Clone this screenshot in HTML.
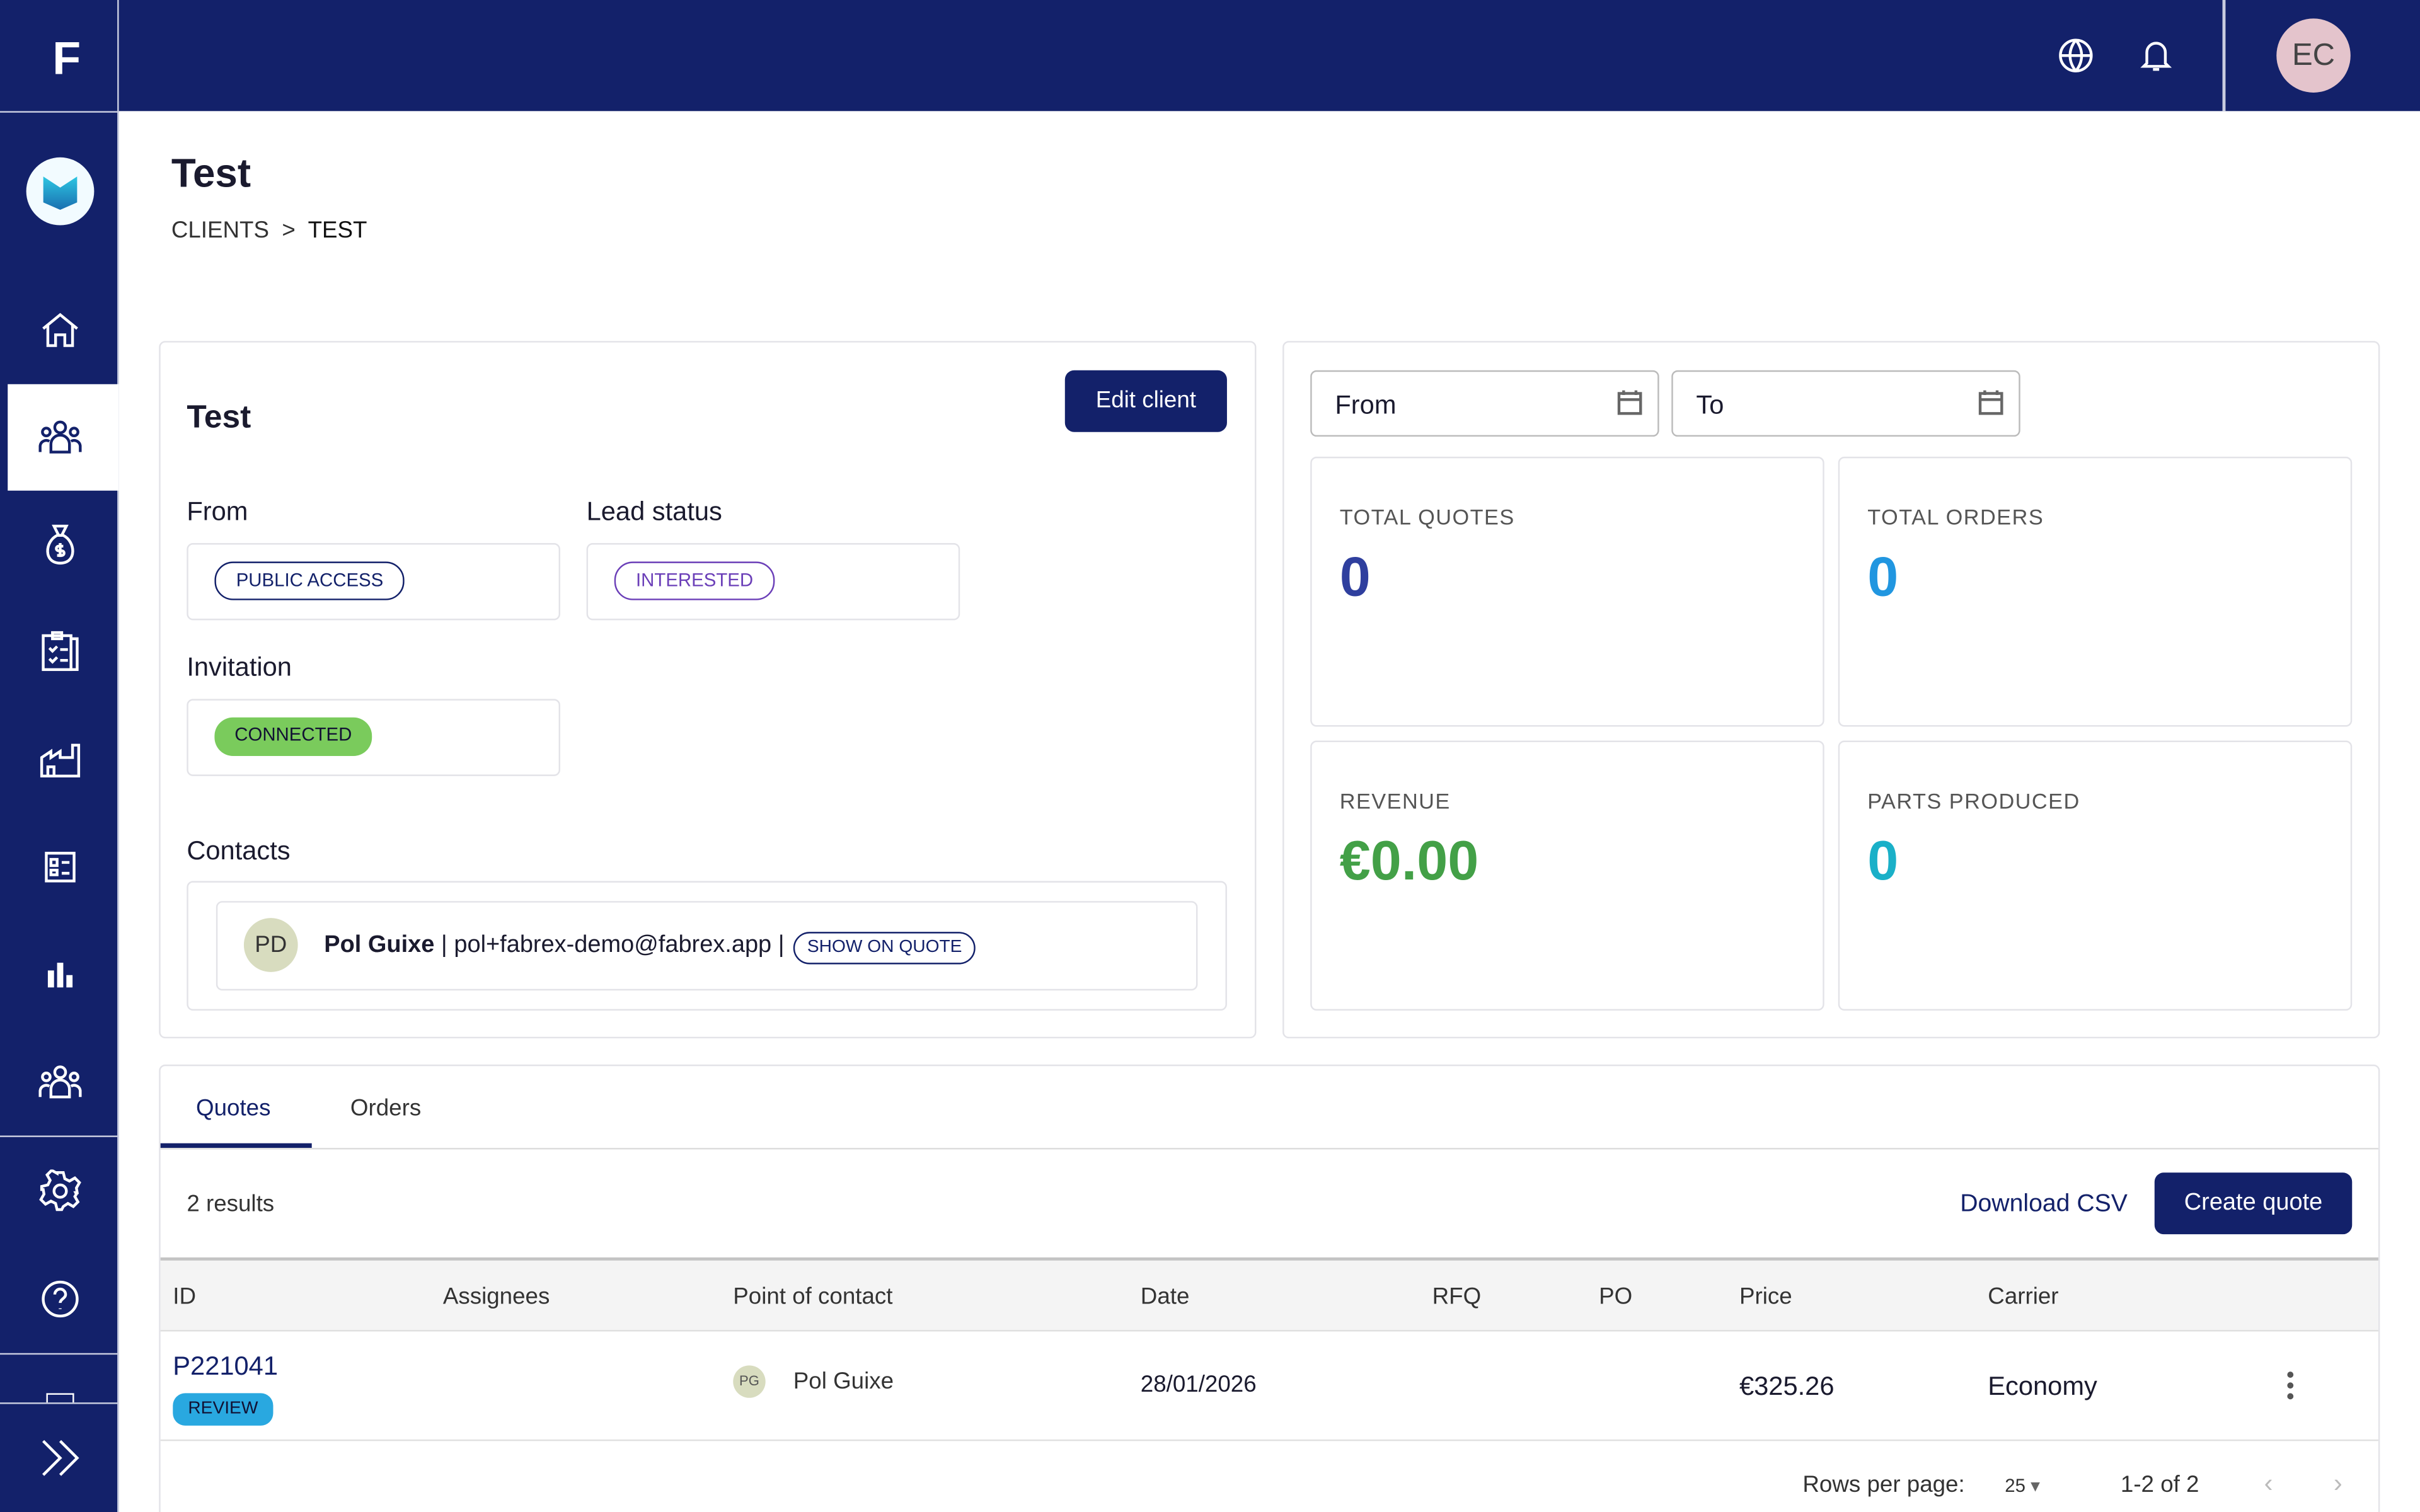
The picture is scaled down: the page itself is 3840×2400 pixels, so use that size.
<!DOCTYPE html>
<html><head><meta charset="utf-8"><style>
*{box-sizing:border-box;margin:0;padding:0}
html,body{width:3840px;height:2400px;overflow:hidden;background:#fff}
#w{width:1568px;height:980px;transform:scale(2.44898);transform-origin:0 0;position:relative;font-family:"Liberation Sans",sans-serif;color:#1a1a2e}
.a{position:absolute}
.nav{background:#13216a}
.card{border:1px solid #e3e3e8;border-radius:4px;background:#fff}
.lbl{font-size:17px;color:#1a1a2e}
.chip{border-radius:12px;font-size:12px;padding:0 13px;height:25px;line-height:23px;display:inline-block}
.kpi{font-size:14px;letter-spacing:0.6px;color:#555}
.big{font-size:36px;font-weight:bold}
.th{font-size:15px;color:#333;top:831px}
svg{stroke:#fff;fill:none;stroke-width:1.8}
</style></head><body><div id="w">
<div class="a nav" style="left:0;top:0;width:1568px;height:72px"></div>
<div class="a nav" style="left:0;top:0;width:77px;height:980px;border-right:1px solid #c9cde0"></div>
<div class="a" style="left:0;top:72px;width:77px;height:1px;background:#c9cde0"></div>
<div class="a" style="left:34px;top:22px;color:#fff;font-size:30px;font-weight:bold">F</div>
<div class="a" style="left:1440px;top:0;width:2px;height:72px;background:#c9cde0"></div>
<svg class="a" style="left:1333px;top:24px" width="24" height="24" viewBox="0 0 24 24"><circle cx="12" cy="12" r="10"/><path d="M2 12h20M12 2c-5 6-5 14 0 20M12 2c5 6 5 14 0 20"/></svg>
<svg class="a" style="left:1386px;top:24px" width="22" height="24" viewBox="0 0 22 24"><path d="M5 17V10a6 6 0 0112 0v7l2 2H3zM9 21h4"/></svg>
<div class="a" style="left:1475px;top:12px;width:48px;height:48px;border-radius:50%;background:#e4c4cc;color:#444;font-size:20px;text-align:center;line-height:48px">EC</div>
<div class="a" style="left:17px;top:102px;width:44px;height:44px;border-radius:50%;background:#f2fbff"></div>
<div class="a" style="left:28px;top:112px;width:22px;height:24px;background:linear-gradient(#2fd0e8,#1a6fb0);clip-path:polygon(0 10%,50% 40%,100% 10%,100% 80%,50% 100%,0 80%)"></div>
<div class="a" style="left:5px;top:249px;width:72px;height:69px;background:#fff"></div>
<svg class="a" style="left:26px;top:201px" width="26" height="26" viewBox="0 0 26 26"><path d="M2 12L13 3l11 9M5 10v13h5v-7h6v7h5V10"/></svg>
<svg class="a" style="left:25px;top:270px;stroke:#13216a" width="28" height="26" viewBox="0 0 28 26"><circle cx="14" cy="7" r="3.5"/><circle cx="5" cy="10" r="2.5"/><circle cx="23" cy="10" r="2.5"/><path d="M8 23v-5a6 6 0 0112 0v5zM1 23v-4a4 4 0 016-3M27 23v-4a4 4 0 00-6-3"/></svg>
<svg class="a" style="left:27px;top:339px" width="24" height="28" viewBox="0 0 24 28"><path d="M8 2h8l-3 6h-2zM10 8C2 12 1 26 12 26s10-14 2-18M12 13v9M14 15h-3a1.5 1.5 0 000 3h2a1.5 1.5 0 010 3h-3"/></svg>
<svg class="a" style="left:26px;top:408px" width="26" height="28" viewBox="0 0 26 28"><rect x="2" y="4" width="18" height="22"/><path d="M20 6h4v20h-4M8 2h6v4H8zM6 12l2 2 3-3M6 19l2 2 3-3M13 13h5M13 20h5"/></svg>
<svg class="a" style="left:25px;top:479px" width="28" height="26" viewBox="0 0 28 26"><path d="M2 24V12l6-4v4l6-4v4h8V4h4v20zM6 24v-6h4v6"/></svg>
<svg class="a" style="left:28px;top:551px" width="22" height="22" viewBox="0 0 22 22"><rect x="2" y="2" width="18" height="18"/><path d="M5 6h4v4H5zM5 13h4v3H5zM12 8h5M12 15h5"/></svg>
<svg class="a" style="left:29px;top:621px;fill:#fff;stroke:none" width="20" height="20" viewBox="0 0 20 20"><rect x="2" y="8" width="4" height="11"/><rect x="8" y="3" width="4" height="16"/><rect x="14" y="11" width="4" height="8"/></svg>
<svg class="a" style="left:25px;top:688px" width="28" height="26" viewBox="0 0 28 26"><circle cx="14" cy="7" r="3.5"/><circle cx="5" cy="10" r="2.5"/><circle cx="23" cy="10" r="2.5"/><path d="M8 23v-5a6 6 0 0112 0v5zM1 23v-4a4 4 0 016-3M27 23v-4a4 4 0 00-6-3"/></svg>
<div class="a" style="left:0;top:736px;width:77px;height:1px;background:#c9cde0"></div>
<svg class="a" style="left:25px;top:758px" width="28" height="28" viewBox="0 0 28 28"><circle cx="14" cy="14" r="4"/><path d="M12 2h4l1 4 3 1.5 3.5-2 3 3-2 3.5L25 15l-1 0 .5 1-1 1.5 2 3.5-3 3-3.5-2L16 24l-1 2h-3l-1-4-3-1.5-3.5 2-3-3 2-3.5L3 13H2v-2l4-1 1.5-3-2-3.5 3-3 3.5 2L12 2z"/></svg>
<svg class="a" style="left:26px;top:829px" width="26" height="26" viewBox="0 0 26 26"><circle cx="13" cy="13" r="11"/><path d="M9.5 10a3.5 3.5 0 117 0c0 2.5-3.5 3-3.5 5.5M13 19v.5"/></svg>
<div class="a" style="left:0;top:877px;width:77px;height:1px;background:#c9cde0"></div>
<div class="a" style="left:30px;top:903px;width:18px;height:6px;border:1.5px solid #fff;border-bottom:0"></div>
<div class="a" style="left:0;top:909px;width:77px;height:1px;background:#c9cde0"></div>
<svg class="a" style="left:25px;top:930px" width="28" height="30" viewBox="0 0 28 30"><path d="M3 4l11 11L3 26M14 4l11 11-11 11"/></svg>

<div class="a" style="left:111px;top:97px;font-size:26px;font-weight:bold">Test</div>
<div class="a" style="left:111px;top:141px;font-size:15px;color:#333">CLIENTS &nbsp;&gt;&nbsp; <span style="color:#111">TEST</span></div>

<div class="a card" style="left:103px;top:221px;width:711px;height:452px"></div>
<div class="a" style="left:121px;top:259px;font-size:21px;font-weight:bold">Test</div>
<div class="a" style="left:690px;top:240px;width:105px;height:40px;background:#13216a;border-radius:6px;color:#fff;font-size:15px;text-align:center;line-height:40px">Edit client</div>
<div class="a lbl" style="left:121px;top:322px">From</div>
<div class="a lbl" style="left:380px;top:322px">Lead status</div>
<div class="a card" style="left:121px;top:352px;width:242px;height:50px"></div>
<div class="a card" style="left:380px;top:352px;width:242px;height:50px"></div>
<div class="a chip" style="left:139px;top:364px;border:1.5px solid #13216a;color:#13216a">PUBLIC ACCESS</div>
<div class="a chip" style="left:398px;top:364px;border:1.5px solid #6b3fb8;color:#6b3fb8">INTERESTED</div>
<div class="a lbl" style="left:121px;top:423px">Invitation</div>
<div class="a card" style="left:121px;top:453px;width:242px;height:50px"></div>
<div class="a chip" style="left:139px;top:465px;background:#7acb5c;color:#113">CONNECTED</div>
<div class="a lbl" style="left:121px;top:542px">Contacts</div>
<div class="a card" style="left:121px;top:571px;width:674px;height:84px"></div>
<div class="a card" style="left:140px;top:584px;width:636px;height:58px"></div>
<div class="a" style="left:158px;top:595px;width:35px;height:35px;border-radius:50%;background:#d8dcbf;font-size:15px;text-align:center;line-height:35px;color:#333">PD</div>
<div class="a" style="left:210px;top:604px;font-size:15.5px"><b>Pol Guixe</b> | pol+fabrex-demo@fabrex.app |</div>
<div class="a chip" style="left:514px;top:604px;height:21px;line-height:18px;border:1.5px solid #13216a;color:#13216a;font-size:11.5px;padding:0 8px">SHOW ON QUOTE</div>

<div class="a card" style="left:831px;top:221px;width:711px;height:452px"></div>
<div class="a card" style="left:849px;top:240px;width:226px;height:43px;border-color:#bbb"><span class="a" style="left:15px;top:12px;font-size:17px">From</span></div>
<div class="a card" style="left:1083px;top:240px;width:226px;height:43px;border-color:#bbb"><span class="a" style="left:15px;top:12px;font-size:17px">To</span></div>
<svg class="a" style="left:1047px;top:252px;stroke:#666" width="18" height="18" viewBox="0 0 18 18"><rect x="2" y="3" width="14" height="13"/><path d="M2 7h14M5 1v3M13 1v3"/></svg>
<svg class="a" style="left:1281px;top:252px;stroke:#666" width="18" height="18" viewBox="0 0 18 18"><rect x="2" y="3" width="14" height="13"/><path d="M2 7h14M5 1v3M13 1v3"/></svg>
<div class="a card" style="left:849px;top:296px;width:333px;height:175px"><div class="a kpi" style="left:18px;top:30px">TOTAL QUOTES</div><div class="a big" style="left:18px;top:56px;color:#2f3f9e">0</div></div>
<div class="a card" style="left:1191px;top:296px;width:333px;height:175px"><div class="a kpi" style="left:18px;top:30px">TOTAL ORDERS</div><div class="a big" style="left:18px;top:56px;color:#2196e0">0</div></div>
<div class="a card" style="left:849px;top:480px;width:333px;height:175px"><div class="a kpi" style="left:18px;top:30px">REVENUE</div><div class="a big" style="left:18px;top:56px;color:#43a047">€0.00</div></div>
<div class="a card" style="left:1191px;top:480px;width:333px;height:175px"><div class="a kpi" style="left:18px;top:30px">PARTS PRODUCED</div><div class="a big" style="left:18px;top:56px;color:#1ab0c8">0</div></div>

<div class="a card" style="left:103px;top:690px;width:1439px;height:300px"></div>
<div class="a" style="left:127px;top:710px;font-size:15px;color:#13216a">Quotes</div>
<div class="a" style="left:227px;top:710px;font-size:15px;color:#333">Orders</div>
<div class="a" style="left:104px;top:741px;width:98px;height:3px;background:#13216a"></div>
<div class="a" style="left:104px;top:744px;width:1437px;height:1px;background:#ddd"></div>
<div class="a" style="left:121px;top:772px;font-size:15px;color:#333">2 results</div>
<div class="a" style="left:1270px;top:772px;font-size:16px;color:#13216a">Download CSV</div>
<div class="a" style="left:1396px;top:760px;width:128px;height:40px;background:#13216a;border-radius:6px;color:#fff;font-size:15.5px;text-align:center;line-height:40px">Create quote</div>
<div class="a" style="left:104px;top:815px;width:1437px;height:48px;background:#f4f4f4;border-top:2px solid #c4c4c4;border-bottom:1px solid #e0e0e0"></div>
<div class="a th" style="left:112px;top:832px">ID</div><div class="a th" style="left:287px;top:832px">Assignees</div><div class="a th" style="left:475px;top:832px">Point of contact</div><div class="a th" style="left:739px;top:832px">Date</div><div class="a th" style="left:928px;top:832px">RFQ</div><div class="a th" style="left:1036px;top:832px">PO</div><div class="a th" style="left:1127px;top:832px">Price</div><div class="a th" style="left:1288px;top:832px">Carrier</div>
<div class="a" style="left:112px;top:876px;font-size:17px;color:#13216a">P221041</div>
<div class="a" style="left:112px;top:903px;width:65px;height:21px;background:#29a8e0;border-radius:8px;font-size:11.5px;color:#113;text-align:center;line-height:21px">REVIEW</div>
<div class="a" style="left:475px;top:885px;width:21px;height:21px;border-radius:50%;background:#d8dcbf;font-size:9px;text-align:center;line-height:21px;color:#555">PG</div>
<div class="a" style="left:514px;top:887px;font-size:15px;color:#333">Pol Guixe</div>
<div class="a" style="left:739px;top:889px;font-size:15px">28/01/2026</div>
<div class="a" style="left:1127px;top:889px;font-size:17px">€325.26</div>
<div class="a" style="left:1288px;top:889px;font-size:17px">Economy</div>
<div class="a" style="left:1482px;top:889px;width:4px;height:4px;border-radius:2px;background:#555;box-shadow:0 7px #555,0 14px #555"></div>
<div class="a" style="left:104px;top:933px;width:1437px;height:1px;background:#e0e0e0"></div>
<div class="a" style="left:1168px;top:954px;font-size:15px;color:#333">Rows per page:</div>
<div class="a" style="left:1299px;top:956px;font-size:12px;color:#333">25 <span style="color:#666">▾</span></div>
<div class="a" style="left:1374px;top:954px;font-size:15px;color:#333">1-2 of 2</div>
<div class="a" style="left:1467px;top:952px;font-size:17px;color:#bbb">‹</div>
<div class="a" style="left:1512px;top:952px;font-size:17px;color:#bbb">›</div>
</div></body></html>
